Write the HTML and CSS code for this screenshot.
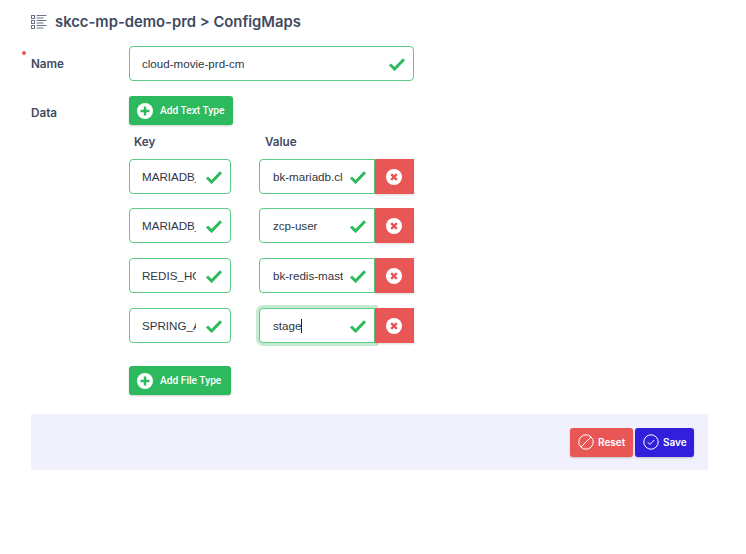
FILE: index.html
```html
<!DOCTYPE html>
<html lang="en">
<head>
    <meta charset="UTF-8">
    <title>ConfigMaps</title>
    <link rel="stylesheet" href="styles.css">
</head>
<body>
    <h1 class="title">
        <svg class="title-icon" width="16" height="16" viewBox="0 0 16 16" fill="none" stroke="#6b7384" stroke-width="1">
            <rect x="0.5" y="1.5" width="3" height="3"/>
            <rect x="0.5" y="6.5" width="3" height="3"/>
            <rect x="0.5" y="11.5" width="3" height="3"/>
            <path d="M5.5 1.5h10M5.5 4h7M5.5 6.5h10M5.5 9h7M5.5 11.5h10M5.5 14h7"/>
        </svg>
        skcc-mp-demo-prd &gt; ConfigMaps
    </h1>

    <!-- Name -->
    <div class="form-row name-row">
        <label class="form-label required">Name</label>
        <div class="field name-field">
            <input type="text" value="cloud-movie-prd-cm">
            <svg class="check" width="18" height="14" viewBox="0 0 18 14"><path d="M2 7.5l4.6 4.5L16 2.2" fill="none" stroke="#2dba5e" stroke-width="3"/></svg>
        </div>
    </div>

    <!-- Data -->
    <div class="form-row data-row">
        <label class="form-label data-label">Data</label>
        <div class="data-body">
            <button class="add-button text-type">
                <svg width="16" height="16" viewBox="0 0 16 16"><circle cx="8" cy="8" r="8" fill="#fff"/><path d="M8 3.5v9M3.5 8h9" stroke="#2dba5e" stroke-width="2.4"/></svg>
                Add Text Type
            </button>

            <div class="kv-head">
                <span class="key-head">Key</span>
                <span>Value</span>
            </div>

            <div class="kv-row">
                <div class="field key-field"><input type="text" value="MARIADB_HOST"><svg class="check" width="18" height="14" viewBox="0 0 18 14"><path d="M2 7.5l4.6 4.5L16 2.2" fill="none" stroke="#2dba5e" stroke-width="3"/></svg></div>
                <div class="field value-field"><input type="text" value="bk-mariadb.cloud-movie"><svg class="check" width="18" height="14" viewBox="0 0 18 14"><path d="M2 7.5l4.6 4.5L16 2.2" fill="none" stroke="#2dba5e" stroke-width="3"/></svg></div>
                <button class="del-button"><svg width="16" height="16" viewBox="0 0 16 16"><circle cx="8" cy="8" r="8" fill="#fff"/><path d="M5.2 5.2l5.6 5.6M10.8 5.2l-5.6 5.6" stroke="#e85656" stroke-width="2.4"/></svg></button>
            </div>
            <div class="kv-row">
                <div class="field key-field"><input type="text" value="MARIADB_USER"><svg class="check" width="18" height="14" viewBox="0 0 18 14"><path d="M2 7.5l4.6 4.5L16 2.2" fill="none" stroke="#2dba5e" stroke-width="3"/></svg></div>
                <div class="field value-field"><input type="text" value="zcp-user"><svg class="check" width="18" height="14" viewBox="0 0 18 14"><path d="M2 7.5l4.6 4.5L16 2.2" fill="none" stroke="#2dba5e" stroke-width="3"/></svg></div>
                <button class="del-button"><svg width="16" height="16" viewBox="0 0 16 16"><circle cx="8" cy="8" r="8" fill="#fff"/><path d="M5.2 5.2l5.6 5.6M10.8 5.2l-5.6 5.6" stroke="#e85656" stroke-width="2.4"/></svg></button>
            </div>
            <div class="kv-row">
                <div class="field key-field"><input type="text" value="REDIS_HOST"><svg class="check" width="18" height="14" viewBox="0 0 18 14"><path d="M2 7.5l4.6 4.5L16 2.2" fill="none" stroke="#2dba5e" stroke-width="3"/></svg></div>
                <div class="field value-field"><input type="text" value="bk-redis-master.cloud"><svg class="check" width="18" height="14" viewBox="0 0 18 14"><path d="M2 7.5l4.6 4.5L16 2.2" fill="none" stroke="#2dba5e" stroke-width="3"/></svg></div>
                <button class="del-button"><svg width="16" height="16" viewBox="0 0 16 16"><circle cx="8" cy="8" r="8" fill="#fff"/><path d="M5.2 5.2l5.6 5.6M10.8 5.2l-5.6 5.6" stroke="#e85656" stroke-width="2.4"/></svg></button>
            </div>
            <div class="kv-row">
                <div class="field key-field"><input type="text" value="SPRING_ACTIVE"><svg class="check" width="18" height="14" viewBox="0 0 18 14"><path d="M2 7.5l4.6 4.5L16 2.2" fill="none" stroke="#2dba5e" stroke-width="3"/></svg></div>
                <div class="field value-field focused"><input type="text" value="stage"><span class="caret"></span><svg class="check" width="18" height="14" viewBox="0 0 18 14"><path d="M2 7.5l4.6 4.5L16 2.2" fill="none" stroke="#2dba5e" stroke-width="3"/></svg></div>
                <button class="del-button"><svg width="16" height="16" viewBox="0 0 16 16"><circle cx="8" cy="8" r="8" fill="#fff"/><path d="M5.2 5.2l5.6 5.6M10.8 5.2l-5.6 5.6" stroke="#e85656" stroke-width="2.4"/></svg></button>
            </div>

            <button class="add-button file-type">
                <svg width="16" height="16" viewBox="0 0 16 16"><circle cx="8" cy="8" r="8" fill="#fff"/><path d="M8 3.5v9M3.5 8h9" stroke="#2dba5e" stroke-width="2.4"/></svg>
                Add File Type
            </button>
        </div>
    </div>

    <!-- Footer buttons -->
    <div class="footer">
        <button class="foot-button reset">
            <svg width="16" height="16" viewBox="0 0 16 16" fill="none" stroke="#fff" stroke-width="1"><circle cx="8" cy="8" r="7.2"/><path d="M3 13L13 3"/></svg>
            Reset
        </button>
        <button class="foot-button save">
            <svg width="16" height="16" viewBox="0 0 16 16" fill="none" stroke="#fff" stroke-width="1"><circle cx="8" cy="8" r="7.2"/><path d="M4.8 8.2l2.2 2.2 4.2-4.4"/></svg>
            Save
        </button>
    </div>
</body>
</html>
```

FILE: styles.css
```css
/* General Styling */
body {
    margin: 0;
    padding: 0 38px 0 31px;
    background: #fff;
    font-family: Roboto, "Liberation Sans", sans-serif;
    color: #3e4a5f;
    overflow: hidden;
}

svg {
    flex-shrink: 0;
}

.title {
    display: flex;
    align-items: center;
    gap: 8px;
    height: 20px;
    margin: 0;
    padding-top: 12px;
    font-family: Inter, Roboto, sans-serif;
    font-size: 14.8px;
    font-weight: 600;
    color: #3e4a5f;
}

.form-row {
    display: flex;
}

.form-label {
    position: relative;
    width: 98px;
    font-size: 11.7px;
    font-weight: 600;
    font-family: Inter, Roboto, sans-serif;
    flex-shrink: 0;
}

.required::before {
    content: "";
    position: absolute;
    top: 5px;
    left: -9px;
    width: 4px;
    height: 4px;
    border-radius: 50%;
    background: #e85656;
}

.name-row {
    margin-top: 14px;
}

.name-row .form-label {
    padding-top: 11px;
}

.data-row {
    margin-top: 15px;
}

.data-label {
    padding-top: 10px;
}

.data-body {
    display: flex;
    flex-direction: column;
    align-items: flex-start;
}

/* Inputs */
.field {
    position: relative;
    display: flex;
    align-items: center;
    box-sizing: border-box;
    height: 35px;
    border: 1px solid #5ccb83;
    border-radius: 4px;
    background: #fff;
}

.field input {
    flex: 1;
    min-width: 0;
    border: none;
    outline: none;
    padding: 0;
    background: transparent;
    font-family: "Liberation Sans", Arial, sans-serif;
    font-size: 11.6px;
    color: #2f3642;
}

.name-field {
    width: 285px;
    padding: 0 7px 0 12px;
}

.key-field {
    width: 102px;
    padding: 0 7px 0 12px;
}

.key-field input {
    margin-right: 9px;
}

.value-field {
    width: 116px;
    margin-left: 28px;
    padding: 0 7px 0 13px;
    border-radius: 4px 0 0 4px;
}

.value-field input {
    margin-right: 6px;
}

.focused {
    box-shadow: 0 0 0 3px #c5ecd2;
}

.focused input {
    flex: 0 0 28px;
    margin-right: 0;
}

.caret {
    width: 1px;
    height: 14px;
    background: #222;
    margin-right: auto;
}

.del-button {
    position: relative;
    width: 39px;
    height: 35px;
    border: none;
    padding: 0 1px 0 0;
    display: flex;
    align-items: center;
    justify-content: center;
    background: #e85656;
    box-shadow: 0 1px 2px rgba(0, 0, 0, 0.15);
}

/* Key / Value rows */
.kv-head {
    display: flex;
    height: 24px;
    margin-top: 10px;
    padding-left: 5px;
    font-family: Inter, Roboto, sans-serif;
    font-size: 11.7px;
    font-weight: 600;
    line-height: 14px;
}

.key-head {
    width: 131px;
}

.kv-row {
    display: flex;
    margin-bottom: 15px;
}

.kv-head + .kv-row {
    margin-bottom: 14px;
}

/* Buttons */
.add-button {
    display: flex;
    align-items: center;
    gap: 7px;
    height: 29px;
    border: none;
    border-radius: 3px;
    padding: 0 8px;
    background: #2dba5e;
    color: #fff;
    font-family: Roboto, sans-serif;
    font-size: 10.2px;
    font-weight: 500;
    white-space: nowrap;
    box-shadow: 0 1px 2px rgba(0, 0, 0, 0.2);
}

.text-type {
    width: 104px;
}

.file-type {
    width: 102px;
    margin-top: 8px;
}

.footer {
    display: flex;
    justify-content: flex-end;
    gap: 2px;
    height: 56px;
    margin-top: 19px;
    box-sizing: border-box;
    padding: 14px 14px 0 0;
    background: #f1f1fd;
}

.foot-button {
    display: flex;
    align-items: center;
    gap: 4px;
    height: 29px;
    border: none;
    border-radius: 3px;
    padding: 0 8px 2px;
    color: #fff;
    font-family: Inter, Roboto, sans-serif;
    font-size: 10px;
    font-weight: 600;
    box-shadow: 0 1px 2px rgba(0, 0, 0, 0.2);
}

.reset {
    width: 63px;
    background: #e85656;
}

.save {
    width: 59px;
    background: #321fdb;
}
```
